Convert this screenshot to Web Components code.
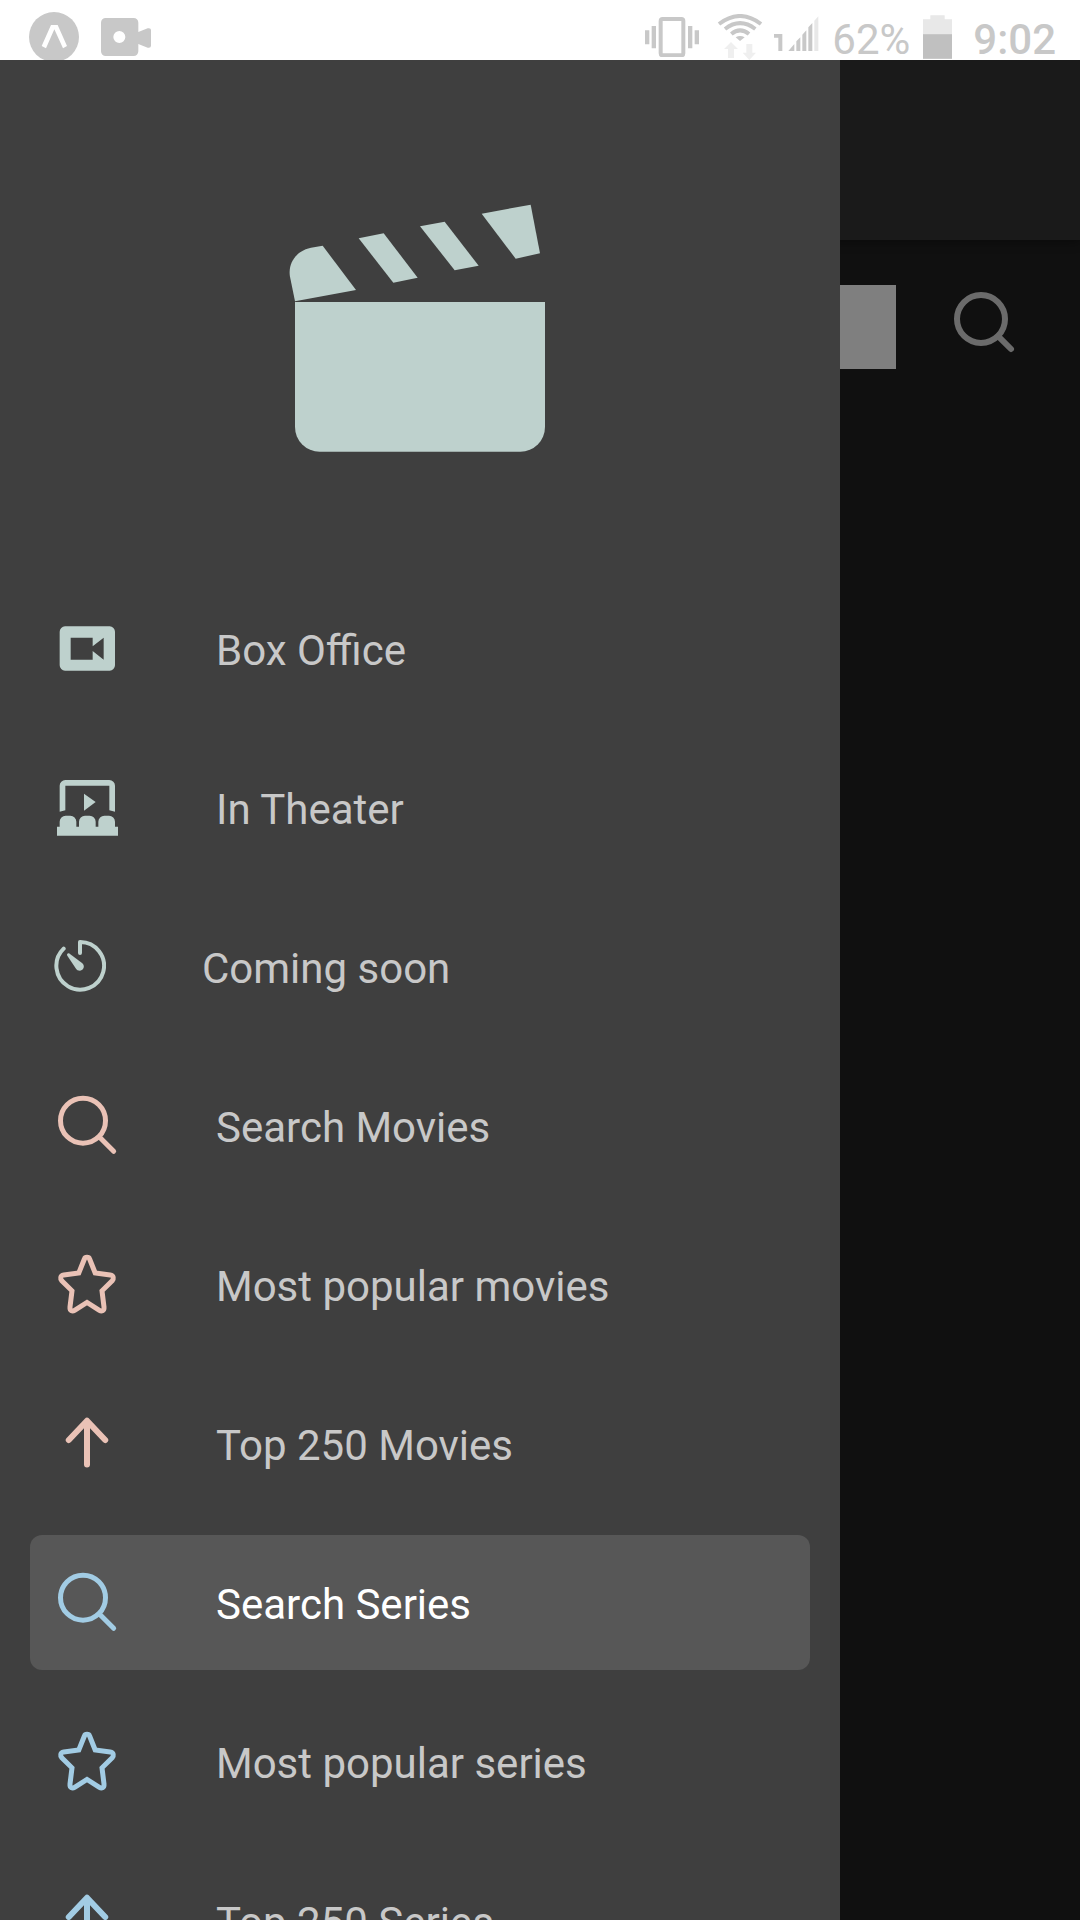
<!DOCTYPE html>
<html lang="en">
<head>
<meta charset="utf-8">
<meta name="viewport" content="width=device-width, initial-scale=1">
<title>Search Series</title>
<style>
  body { margin: 0; font-family: Roboto, sans-serif; background: #101010; }
</style>
</head>
<body>
<movie-app></movie-app>
<script>
const ICONS = {
  clapper: { box: '0 0 960 900', w: 320, h: 300, art: `<g fill="currentColor"><path d="M105 366H855V741A74 74 0 0 1 781 815H179A74 74 0 0 1 105 741Z"/><path d="M105 364L90 290C83 250 108 212 153 203L188 197L288 330Z"/><path d="M296 175L371 160L473 293L400 308Z"/><path d="M480 139L554 125L656 257L584 271Z"/><path d="M665 101L812 74L840 220L767 236Z"/></g>` },
  boxOffice: { box: '72 46 198 198', w: 66, h: 66, art: `<path fill="currentColor" fill-rule="evenodd" d="M105 80H239A16 16 0 0 1 255 96V197A16 16 0 0 1 239 213H105A16 16 0 0 1 89 197V96A16 16 0 0 1 105 80ZM122 114V180H188V154L221 180V114L188 140V114Z"/>` },
  theater: { box: '72 523 198 198', w: 66, h: 66, art: `<g fill="currentColor"><path d="M89 636V558A17 17 0 0 1 106 541H238A17 17 0 0 1 255 558V636L238 632V558H106V632Z"/><path d="M162 582L197 607L162 633Z"/><path d="M81 681H89V666A18 18 0 0 1 107 648H121A18 18 0 0 1 139 666V681H147V666A18 18 0 0 1 165 648H179A18 18 0 0 1 197 666V681H205V666A18 18 0 0 1 223 648H237A18 18 0 0 1 255 666V681H264V708H81Z"/></g>` },
  timer: { box: '72 70 156 198', w: 52, h: 66, art: `<path fill="none" stroke="currentColor" stroke-width="12" stroke-linecap="round" stroke-linejoin="round" d="M101 117A71.500 71.500 0 1 0 150 97V130"/><path fill="currentColor" d="M119 132L156 160C166 168 161 182 150 183C144 183 140 180 138 177L112 138C109 133 114 129 119 132Z"/>` },
  search: { box: '72 547 198 198', w: 66, h: 66, art: `<g fill="none" stroke="currentColor" stroke-width="15"><circle cx="159" cy="633" r="67.500"/><path stroke-linecap="round" d="M209 683L251 725"/></g>` },
  searchBold: { box: '504 255 216 216', w: 72, h: 72, art: `<g fill="none" stroke="currentColor" stroke-width="18"><circle cx="603" cy="357" r="72"/><path stroke-linecap="round" d="M655 409L693 447"/></g>` },
  star: { box: '0 0 66 66', w: 66, h: 66, art: `<path fill="none" stroke="currentColor" stroke-width="5" d="M41.200 22L35.600 8C34.800 5.800 31.200 5.800 30.400 8L24.800 22L9.800 23.900C6 24.500 6.200 28 7.800 29.800L18 39.800L16 56C15.600 60.500 18.700 60.500 20.600 59.300L33 51.500L45.400 59.300C47.300 60.500 50.400 60.500 50 56L48 39.800L58.200 29.800C59.800 28 60 24.500 56.200 23.900Z"/>` },
  arrow: { box: '0 0 66 66', w: 66, h: 66, art: `<path fill="none" stroke="currentColor" stroke-width="6" stroke-linecap="round" stroke-linejoin="round" d="M14.800 30L33 10.800L51.200 30M33 12V54.500"/>` },
  expo: { box: '0 0 150 150', w: 50, h: 50, art: `<circle cx="75" cy="75" r="75" fill="currentColor"/><path fill="#fff" d="M66 39H86L114 102L102 109L76 52L51 109L38 102Z"/>` },
  camera: { box: '0 0 150 114', w: 50, h: 38, art: `<path fill="currentColor" fill-rule="evenodd" d="M14 0H98A14 14 0 0 1 112 14V42L140 31Q150 29 150 36V83Q150 91 140 89L112 78V100A14 14 0 0 1 98 114H14A14 14 0 0 1 0 100V14A14 14 0 0 1 14 0ZM55 39A18 18 0 1 0 55 75A18 18 0 1 0 55 39Z"/>` },
  vibrate: { box: '75 50 162 120', w: 54, h: 40, art: `<rect x="122" y="56" width="68" height="109" rx="6" fill="none" stroke="currentColor" stroke-width="12"/><path fill="currentColor" d="M75 90H88V132H75ZM95 77H108V144H95ZM204 77H217V144H204ZM224 90H237V132H224Z"/>` },
  wifi: { box: '294 42 138 138', w: 46, h: 46, art: `<g fill="none" stroke="currentColor" stroke-width="12"><path d="M300 72Q363 24 426 72"/><path d="M318 87Q363 52 409 87"/><path d="M337 102Q363 80 390 102"/></g><path fill="currentColor" d="M350 112Q363 104 377 112L363 123Z"/><path fill="#efefef" d="M336 126L357 147H345V174H327V147H315ZM382 132H400V158H411L391 180L371 158H382Z"/>` },
  signal: { box: '461 48 135 114', w: 45, h: 38, art: `<path fill="currentColor" d="M461 105H486V156H474V116H461ZM504 156L522 135V156ZM528 156V127L540 115V156ZM546 156V107L558 94V156ZM564 156V85L576 72V156Z"/><path fill="#e8e8e8" d="M582 156V65L594 52V156Z"/>` },
  battery: { box: '909 45 87 131', w: 29, h: 44, art: `<path fill="#e8e8e8" d="M931 45H974V57H996V103H909V57H931Z"/><path fill="#c0c0c0" d="M909 102H996V176H909Z"/>` }
};

class AppIcon extends HTMLElement {
  connectedCallback() {
    if (this.shadowRoot) return;
    const i = ICONS[this.getAttribute('name')];
    this.attachShadow({ mode: 'open' }).innerHTML = `
      <style>:host{display:block;flex:none} svg{display:block}</style>
      <svg width="${i.w}" height="${i.h}" viewBox="${i.box}" aria-hidden="true">${i.art}</svg>`;
  }
}
customElements.define('app-icon', AppIcon);

class StatusBar extends HTMLElement {
  connectedCallback() {
    if (this.shadowRoot) return;
    this.attachShadow({ mode: 'open' }).innerHTML = `
      <style>
        :host{display:flex;justify-content:space-between;height:60px;box-sizing:border-box;
          padding:12px 24px 0 29px;background:#fff;color:#c8c8c8;font-size:42px;line-height:56px}
        .group{display:flex;align-items:flex-start}
        .left{gap:22px}
        .left app-icon + app-icon{margin-top:6px}
        .right{gap:13px}
        .right > *{margin-top:3px}
        .right .wifi{margin:2px -2px 0 5px}
        .right .vibrate{margin-top:5px}
        .right .text{margin-top:0}
        .clock{font-weight:500;margin-left:8px}
      </style>
      <div class="group left"><app-icon name="expo"></app-icon><app-icon name="camera"></app-icon></div>
      <div class="group right">
        <app-icon class="vibrate" name="vibrate"></app-icon>
        <app-icon class="wifi" name="wifi"></app-icon>
        <app-icon name="signal"></app-icon>
        <span class="text">62%</span>
        <app-icon name="battery"></app-icon>
        <span class="text clock">9:02</span>
      </div>`;
  }
}
customElements.define('status-bar', StatusBar);

class DrawerItem extends HTMLElement {
  connectedCallback() {
    if (this.shadowRoot) return;
    this.attachShadow({ mode: 'open' }).innerHTML = `
      <style>
        :host{display:block}
        a{display:flex;align-items:center;gap:96px;height:135px;box-sizing:border-box;padding:0 24px;
          border-radius:12px;color:#c8c8c8;text-decoration:none;font-size:42px;line-height:50px}
        :host([active]) a{background:#575757;color:#fff}
        app-icon{color:var(--tint);margin-bottom:1px}
        span{padding-top:4px;white-space:nowrap}
      </style>
      <a href="#"><app-icon name="${this.getAttribute('icon')}"></app-icon><span><slot></slot></span></a>`;
    if (this.hasAttribute('active')) this.shadowRoot.querySelector('a').setAttribute('aria-current', 'page');
  }
}
customElements.define('drawer-item', DrawerItem);

class AppDrawer extends HTMLElement {
  connectedCallback() {
    if (this.shadowRoot) return;
    this.attachShadow({ mode: 'open' }).innerHTML = `
      <style>
        :host{display:block;overflow:hidden auto;scrollbar-width:none;box-sizing:border-box;background:#3f3f3f;padding:120px 30px 0}
        .logo{display:flex;justify-content:center;color:#bed1cd;margin-bottom:101px}
        nav{display:flex;flex-direction:column;gap:24px}
      </style>
      <div class="logo"><app-icon name="clapper"></app-icon></div>
      <nav aria-label="Main"><slot></slot></nav>`;
  }
}
customElements.define('app-drawer', AppDrawer);

class SearchScreen extends HTMLElement {
  connectedCallback() {
    if (this.shadowRoot) return;
    this.attachShadow({ mode: 'open' }).innerHTML = `
      <style>
        :host{display:flex;flex-direction:column;overflow:hidden;background:#202020}
        header{height:180px;background:#343434;box-shadow:0 2px 10px rgba(0,0,0,.4)}
        form{display:flex;align-items:flex-start;gap:52px;padding:45px 60px}
        input{flex:1;min-width:0;height:84px;box-sizing:border-box;border:0;border-radius:0;padding:0 24px;
          background:#fff;font:42px Roboto,sans-serif}
        button{border:0;padding:0;background:none;color:#d6d6d6}
      </style>
      <header></header>
      <form onsubmit="return false">
        <input type="search" aria-label="Search series">
        <button type="submit" aria-label="Search"><app-icon name="searchBold"></app-icon></button>
      </form>`;
  }
}
customElements.define('search-screen', SearchScreen);

class MovieApp extends HTMLElement {
  connectedCallback() {
    if (this.shadowRoot) return;
    this.attachShadow({ mode: 'open' }).innerHTML = `
      <style>
        :host{display:flex;flex-direction:column;height:100vh;overflow:hidden}
        .stage{flex:1;min-height:0;display:grid;grid-template:minmax(0,1fr) / minmax(0,7fr) minmax(0,2fr)}
        search-screen,.scrim{grid-area:1 / 1 / 2 / 3}
        .scrim{background:rgba(0,0,0,.5)}
        app-drawer{grid-area:1 / 1}
        .mint{--tint:#bed1cd} .peach{--tint:#eac2b6} .blue{--tint:#a2cce4}
      </style>
      <status-bar></status-bar>
      <div class="stage">
        <search-screen></search-screen>
        <div class="scrim"></div>
        <app-drawer>
          <drawer-item class="mint" icon="boxOffice">Box Office</drawer-item>
          <drawer-item class="mint" icon="theater">In Theater</drawer-item>
          <drawer-item class="mint" icon="timer">Coming soon</drawer-item>
          <drawer-item class="peach" icon="search">Search Movies</drawer-item>
          <drawer-item class="peach" icon="star">Most popular movies</drawer-item>
          <drawer-item class="peach" icon="arrow">Top 250 Movies</drawer-item>
          <drawer-item class="blue" icon="search" active>Search Series</drawer-item>
          <drawer-item class="blue" icon="star">Most popular series</drawer-item>
          <drawer-item class="blue" icon="arrow">Top 250 Series</drawer-item>
        </app-drawer>
      </div>`;
  }
}
customElements.define('movie-app', MovieApp);
</script>
</body>
</html>
